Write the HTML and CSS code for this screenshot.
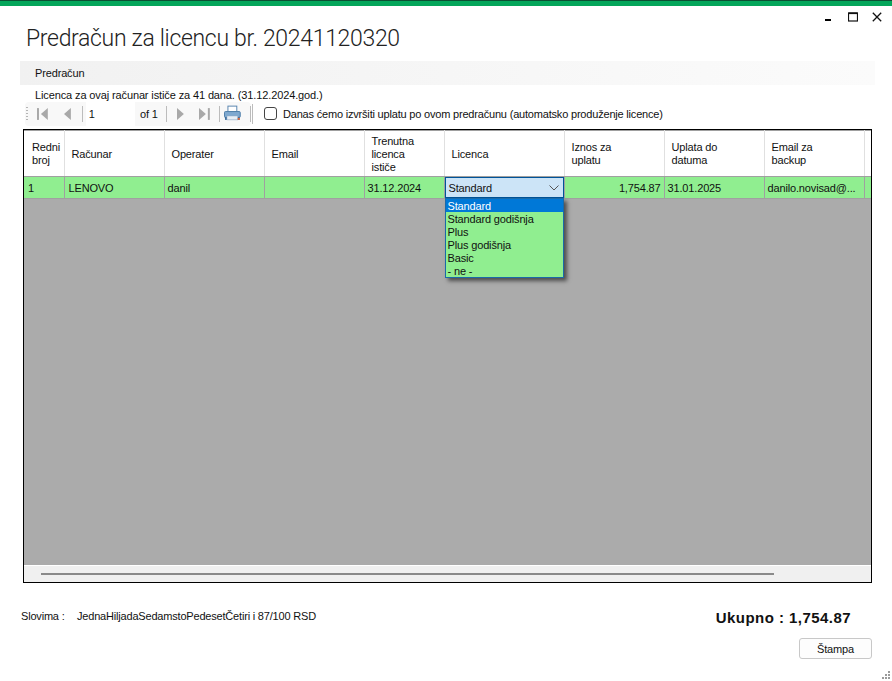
FILE: index.html
```html
<!DOCTYPE html>
<html lang="sr">
<head>
    <meta charset="UTF-8">
    <meta name="viewport" content="width=device-width, initial-scale=1.0">
    <title>Predračun za licencu</title>
    <link rel="stylesheet" href="styles.css">
</head>
<body>
    <div class="window">
        <div class="accent"></div>
        <div class="controls">
            <svg width="10" height="10" viewBox="0 0 10 10"><rect x="1" y="7" width="6" height="2" fill="#000"/></svg>
            <svg width="10" height="10" viewBox="0 0 10 10"><rect x="0.5" y="1" width="9" height="8" fill="none" stroke="#111" stroke-width="1.2"/><rect x="0.5" y="0.5" width="9" height="1.6" fill="#111"/></svg>
            <svg width="10" height="10" viewBox="0 0 10 10"><path d="M0.8 0.8L9.2 9.2M9.2 0.8L0.8 9.2" stroke="#111" stroke-width="1.3"/></svg>
        </div>
        <h1 class="title">Predračun za licencu br. 20241120320</h1>
        <div class="section">Predračun</div>
        <p class="notice">Licenca za ovaj računar ističe za 41 dana. (31.12.2024.god.)</p>

        <div class="toolrow">
            <div class="toolbar">
                <span class="grip"></span>
                <svg class="nav first" width="11" height="14" viewBox="0 0 11 14"><rect x="0" y="1" width="2" height="12" fill="#a8a8a8"/><path d="M11 1V13L4 7Z" fill="#a8a8a8"/></svg>
                <svg class="nav prev" width="8" height="14" viewBox="0 0 8 14"><path d="M8 1V13L1 7Z" fill="#a8a8a8"/></svg>
                <span class="sep sep-a"></span>
                <span class="pageinput">1</span>
                <span class="of">of 1</span>
                <span class="sep sep-b"></span>
                <svg class="nav next" width="8" height="14" viewBox="0 0 8 14"><path d="M0 1V13L7 7Z" fill="#a8a8a8"/></svg>
                <svg class="nav last" width="11" height="14" viewBox="0 0 11 14"><path d="M0 1V13L7 7Z" fill="#a8a8a8"/><rect x="9" y="1" width="2" height="12" fill="#a8a8a8"/></svg>
                <span class="sep sep-c"></span>
                <svg class="printer" width="17" height="17" viewBox="0 0 17 17">
                    <rect x="4" y="1" width="9" height="6" fill="#fff" stroke="#5a86b0"/>
                    <rect x="0.5" y="6.5" width="16" height="6" rx="1" fill="#7fa9d0" stroke="#4f7faa"/>
                    <rect x="1" y="12" width="15" height="3" fill="#3f6f9f"/>
                    <rect x="3" y="11" width="11" height="4" fill="#e8eef5" stroke="#8aa6c0" stroke-width="0.5"/>
                    <rect x="14" y="13" width="2" height="2" fill="#e2683a"/>
                </svg>
                <span class="sep sep-d"></span>
            </div>
            <span class="sep sep-e"></span>
            <label class="autopay"><span class="check"></span>Danas ćemo izvršiti uplatu po ovom predračunu (automatsko produženje licence)</label>
        </div>

        <div class="grid">
            <table>
                <colgroup>
                    <col class="c-no"><col class="c-std"><col class="c-std"><col class="c-std">
                    <col class="c-exp"><col class="c-lic"><col class="c-std"><col class="c-std"><col class="c-std"><col>
                </colgroup>
                <thead>
                    <tr>
                        <th class="first-head">Redni<br>broj</th>
                        <th>Računar</th>
                        <th>Operater</th>
                        <th>Email</th>
                        <th>Trenutna<br>licenca<br>ističe</th>
                        <th>Licenca</th>
                        <th>Iznos za<br>uplatu</th>
                        <th>Uplata do<br>datuma</th>
                        <th>Email za<br>backup</th>
                        <th></th>
                    </tr>
                </thead>
                <tbody>
                    <tr>
                        <td class="wide">1</td>
                        <td class="wide">LENOVO</td>
                        <td>danil</td>
                        <td></td>
                        <td>31.12.2024</td>
                        <td class="combo-cell">
                            <div class="combo">Standard
                                <svg width="10" height="6" viewBox="0 0 10 6"><path d="M0.5 0.5L5 5L9.5 0.5" fill="none" stroke="#555"/></svg>
                            </div>
                            <ul class="dropdown">
                                <li class="selected">Standard</li>
                                <li>Standard godišnja</li>
                                <li>Plus</li>
                                <li>Plus godišnja</li>
                                <li>Basic</li>
                                <li>- ne -</li>
                            </ul>
                        </td>
                        <td class="num">1,754.87</td>
                        <td>31.01.2025</td>
                        <td>danilo.novisad@...</td>
                        <td></td>
                    </tr>
                </tbody>
            </table>
            <div class="scrollbar"><span class="thumb"></span></div>
        </div>

        <div class="footer">
            <div class="words"><span class="words-label">Slovima :</span>JednaHiljadaSedamstoPedesetČetiri i 87/100 RSD</div>
            <div class="totals">
                <div class="total">Ukupno : 1,754.87</div>
                <button class="print">Štampa</button>
            </div>
        </div>
        <svg class="resize" width="9" height="9" viewBox="0 0 9 9"><path d="M7 0h2v2H7zM4 3h2v2H4zM7 3h2v2H7zM1 6h2v2H1zM4 6h2v2H4zM7 6h2v2H7z" fill="#9a9a9a"/></svg>
    </div>
</body>
</html>
```

FILE: styles.css
```css
* {
    box-sizing: border-box;
}
body {
    margin: 0;
    background-color: #fff;
    font-family: "Liberation Sans", Arial, sans-serif;
    font-size: 11px;
    letter-spacing: -0.15px;
    line-height: 14px;
    color: #111;
}
.window {
    position: relative;
    height: 681px;
    overflow: hidden;
}
.accent {
    height: 6px;
    background-color: #04a65a;
    border-top: 1px solid #0b4f33;
}
.controls {
    display: flex;
    justify-content: flex-end;
    gap: 14px;
    height: 15px;
    padding: 6px 10px 0 0;
}
.controls svg {
    display: block;
}
.title {
    margin: 2px 0 0 26px;
    height: 31px;
    font-family: Roboto, sans-serif;
    font-size: 23px;
    font-weight: 300;
    letter-spacing: -0.32px;
    line-height: 31px;
    color: #222;
}
.section {
    margin: 7px 17px 0 20px;
    height: 24px;
    padding-left: 15px;
    line-height: 24px;
    background: linear-gradient(to right, #f1f1f1, #fbfbfb);
}
.notice {
    margin: 3px 0 0 35px;
    height: 13px;
    letter-spacing: -0.12px;
}
.toolrow {
    display: flex;
    align-items: center;
    height: 25px;
    margin-left: 25px;
}
.toolbar {
    display: flex;
    align-items: center;
    width: 226px;
    height: 24px;
    background-color: #f8f8f8;
    border-radius: 4px;
}
.grip {
    width: 2px;
    height: 14px;
    margin-left: 1px;
    background-image: linear-gradient(#b5b5b5 50%, transparent 50%);
    background-size: 2px 3px;
}
.nav {
    display: block;
}
.first { margin-left: 9px; }
.prev { margin-left: 15px; }
.sep {
    width: 1px;
    height: 16px;
    background-color: #bcbcbc;
}
.sep-a { margin-left: 11px; }
.pageinput {
    width: 50px;
    height: 24px;
    margin-left: 3px;
    padding-left: 3px;
    line-height: 24px;
    background-color: #fff;
}
.of {
    width: 20px;
    margin-left: 5px;
    white-space: nowrap;
}
.sep-b { margin-left: 6px; }
.next { margin-left: 10px; }
.last { margin-left: 15px; }
.sep-c { margin-left: 9px; }
.printer { margin-left: 4px; }
.sep-d { margin-left: 9px; }
.sep-e { margin-left: 1px; height: 20px; }
.autopay {
    display: flex;
    align-items: center;
    margin-left: 11px;
    letter-spacing: -0.19px;
}
.check {
    width: 13px;
    height: 13px;
    margin-right: 6px;
    background-color: #fff;
    border: 1px solid #444;
    border-radius: 3px;
}
.grid {
    display: flex;
    flex-direction: column;
    justify-content: space-between;
    width: 849px;
    height: 454px;
    margin: 3px 0 0 23px;
    background-color: #ababab;
    border: 1px solid #000;
}
table {
    width: 100%;
    table-layout: fixed;
    border-collapse: collapse;
}
.c-no { width: 40px; }
.c-std { width: 100px; }
.c-exp { width: 80px; }
.c-lic { width: 120px; }
th {
    height: 46px;
    padding: 1px 7px 0;
    background-color: #fff;
    border-top: 1px solid #a0a0a0;
    border-right: 1px solid #e0e0e0;
    border-bottom: 1px solid #a0a0a0;
    font-weight: normal;
    text-align: left;
    line-height: 13px;
}
th.first-head {
    padding: 1px 0 0 8px;
}
td {
    height: 22px;
    padding: 0 3px;
    background-color: #90ee90;
    border-right: 1px solid #a0a0a0;
    border-bottom: 1px solid #a0a0a0;
    white-space: nowrap;
}
td.wide {
    padding-left: 4px;
}
th:last-child,
td:last-child {
    border-right: none;
}
.num {
    text-align: right;
}
.combo-cell {
    position: relative;
    padding: 0;
}
.combo {
    display: flex;
    align-items: center;
    justify-content: space-between;
    height: 21px;
    padding: 0 4px 0 3px;
    background-color: #cce4f7;
    border: 1px solid #005499;
}
.dropdown {
    position: absolute;
    top: 21px;
    left: 0;
    z-index: 2;
    width: 119px;
    margin: 0;
    padding: 0;
    list-style-type: none;
    background-color: #90ee90;
    border: 1px solid #1a6aa8;
    box-shadow: 3px 3px 4px rgba(0, 0, 0, 0.55);
}
.dropdown li {
    height: 13px;
    padding-left: 2px;
    line-height: 15px;
}
.dropdown .selected {
    background-color: #0078d7;
    color: #fff;
}
.scrollbar {
    display: flex;
    align-items: center;
    height: 17px;
    padding-left: 17px;
    background-color: #f0f0f0;
    border-top: 1px solid #fff;
}
.thumb {
    width: 733px;
    height: 2px;
    background-color: #8a8a8a;
}
.footer {
    display: flex;
    justify-content: space-between;
    margin: 26px 20px 0 21px;
}
.words {
    letter-spacing: -0.19px;
}
.words-label {
    display: inline-block;
    width: 56px;
}
.totals {
    display: flex;
    flex-direction: column;
    align-items: flex-end;
}
.total {
    margin: 2px 21px 0 0;
    font-size: 15px;
    font-weight: bold;
    letter-spacing: 0.45px;
}
.print {
    width: 73px;
    height: 21px;
    margin-top: 13px;
    padding: 0;
    background-color: #fdfdfd;
    border: 1px solid #c8c8c8;
    border-radius: 3px;
    font-family: inherit;
    font-size: 11px;
    letter-spacing: inherit;
    color: #111;
}
.resize {
    position: absolute;
    right: 2px;
    bottom: 1px;
}
```
